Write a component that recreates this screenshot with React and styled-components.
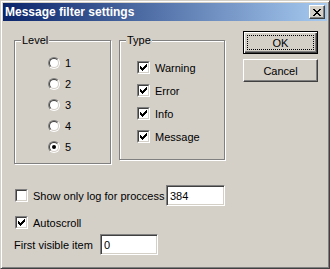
import React from 'react';
import styled, { createGlobalStyle } from 'styled-components';

const GlobalStyle = createGlobalStyle`
  html, body {
    margin: 0;
    padding: 0;
    background: #d4d0c8;
  }
  body {
    font-family: "Liberation Sans", Arial, sans-serif;
    font-size: 11px;
    color: #000;
  }
`;

const Window = styled.div`
  box-sizing: border-box;
  width: 330px;
  height: 269px;
  padding: 2px;
  background: #d4d0c8;
  border: 1px solid;
  border-color: #d4d0c8 #404040 #404040 #d4d0c8;
  box-shadow: inset 1px 1px 0 #fff, inset -1px -1px 0 #808080;
  display: flex;
  flex-direction: column;
`;

const TitleBar = styled.div`
  height: 18px;
  display: flex;
  align-items: center;
  justify-content: space-between;
  padding: 0 2px 0 2px;
  background: linear-gradient(to right, #0a246a, #a6caf0);
`;

const TitleText = styled.span`
  color: #fff;
  font-weight: bold;
  font-size: 12px;
`;

const CloseButton = styled.button`
  box-sizing: border-box;
  width: 16px;
  height: 14px;
  padding: 0;
  background: #d4d0c8;
  border: 1px solid;
  border-color: #fff #404040 #404040 #fff;
  box-shadow: inset -1px -1px 0 #808080;
  display: flex;
  align-items: center;
  justify-content: center;
`;

const Body = styled.div`
  padding: 13px 0 0 11px;
  display: flex;
  flex-direction: column;
`;

const TopRow = styled.div`
  display: flex;
  align-items: flex-start;
`;

const Group = styled.fieldset`
  box-sizing: border-box;
  margin: 0 ${(p) => p.$gapRight || 0}px 0 0;
  padding: 0;
  width: ${(p) => p.$width}px;
  height: ${(p) => p.$height}px;
  border: 1px solid #808080;
  box-shadow: inset 1px 1px 0 #fff, 1px 1px 0 #fff;
`;

const Legend = styled.legend`
  margin-left: 6px;
  padding: 0 1px;
  background: #d4d0c8;
  line-height: 13px;
`;

const OptionList = styled.div`
  display: flex;
  flex-direction: column;
  padding: ${(p) => p.$top}px 0 0 ${(p) => p.$left}px;
`;

const OptionRow = styled.label`
  display: flex;
  align-items: center;
  height: ${(p) => p.$height}px;
  gap: 5px;
`;

const RadioOuter = styled.span`
  box-sizing: border-box;
  width: 12px;
  height: 12px;
  border-radius: 50%;
  border: 1px solid;
  border-color: #808080 #fff #fff #808080;
  display: flex;
`;

const RadioInner = styled.span`
  box-sizing: border-box;
  flex: 1;
  border-radius: 50%;
  border: 1px solid;
  border-color: #404040 #d4d0c8 #d4d0c8 #404040;
  background: #fff;
  display: flex;
  align-items: center;
  justify-content: center;
`;

const RadioDot = styled.span`
  width: 4px;
  height: 4px;
  border-radius: 50%;
  background: #000;
`;

const CheckOuter = styled.span`
  box-sizing: border-box;
  flex: none;
  width: 13px;
  height: 13px;
  border: 1px solid;
  border-color: #808080 #fff #fff #808080;
  display: flex;
`;

const CheckInner = styled.span`
  box-sizing: border-box;
  flex: 1;
  border: 1px solid;
  border-color: #404040 #d4d0c8 #d4d0c8 #404040;
  background: #fff;
  display: flex;
  align-items: center;
  justify-content: center;
`;

const ButtonColumn = styled.div`
  display: flex;
  flex-direction: column;
  gap: 5px;
  margin-top: -3px;
`;

const Button = styled.button`
  position: relative;
  box-sizing: border-box;
  width: 75px;
  height: 23px;
  padding: 0;
  font-family: inherit;
  font-size: 11px;
  color: #000;
  background: #d4d0c8;
  border: 1px solid;
  border-color: ${(p) => (p.$default ? '#000' : '#fff #404040 #404040 #fff')};
  box-shadow: ${(p) =>
    p.$default
      ? 'inset 1px 1px 0 #fff, inset -1px -1px 0 #404040, inset -2px -2px 0 #808080'
      : 'inset -1px -1px 0 #808080'};

  &::after {
    content: '';
    display: ${(p) => (p.$default ? 'block' : 'none')};
    position: absolute;
    inset: 3px;
    border: 1px dotted #000;
  }
`;

const FieldRow = styled.div`
  display: flex;
  align-items: center;
  height: ${(p) => p.$height}px;
  margin-top: ${(p) => p.$top || 0}px;
  padding-left: ${(p) => p.$indent || 0}px;
`;

const RowLabel = styled.span`
  width: ${(p) => p.$width}px;
  flex: none;
  margin-left: ${(p) => p.$gap || 0}px;
`;

const TextBox = styled.input`
  box-sizing: border-box;
  width: ${(p) => p.$width}px;
  height: 21px;
  padding: 0 3px;
  font-family: inherit;
  font-size: 11px;
  background: #fff;
  border: 1px solid;
  border-color: #808080 #fff #fff #808080;
  box-shadow: inset 1px 1px 0 #404040, inset -1px -1px 0 #d4d0c8;
  outline: none;
`;

const CheckMark = () => (
  <svg width="7" height="7" viewBox="0 0 7 7" shapeRendering="crispEdges">
    <path
      d="M0 2h1v3H0zM1 3h1v3H1zM2 4h1v3H2zM3 3h1v3H3zM4 2h1v3H4zM5 1h1v3H5zM6 0h1v3H6z"
      fill="#000"
    />
  </svg>
);

const CloseGlyph = () => (
  <svg width="8" height="7" viewBox="0 0 8 7" shapeRendering="crispEdges">
    <path
      d="M0 0h2v1H0zM6 0h2v1H6zM1 1h2v1H1zM5 1h2v1H5zM2 2h4v1H2zM3 3h2v1H3zM2 4h4v1H2zM1 5h2v1H1zM5 5h2v1H5zM0 6h2v1H0zM6 6h2v1H6z"
      fill="#000"
    />
  </svg>
);

const Radio = ({ checked }) => (
  <RadioOuter>
    <RadioInner>{checked && <RadioDot />}</RadioInner>
  </RadioOuter>
);

const Checkbox = ({ checked }) => (
  <CheckOuter>
    <CheckInner>{checked && <CheckMark />}</CheckInner>
  </CheckOuter>
);

const levels = [1, 2, 3, 4, 5];
const types = ['Warning', 'Error', 'Info', 'Message'];

const App = () => (
  <>
    <GlobalStyle />
    <Window>
      <TitleBar>
        <TitleText>Message filter settings</TitleText>
        <CloseButton>
          <CloseGlyph />
        </CloseButton>
      </TitleBar>
      <Body>
        <TopRow>
          <Group $width={97} $height={130} $gapRight={8}>
            <Legend>Level</Legend>
            <OptionList $top={5} $left={33}>
              {levels.map((lv) => (
                <OptionRow key={lv} $height={21}>
                  <Radio checked={lv === 5} />
                  {lv}
                </OptionRow>
              ))}
            </OptionList>
          </Group>
          <Group $width={106} $height={126} $gapRight={18}>
            <Legend>Type</Legend>
            <OptionList $top={9} $left={17}>
              {types.map((t) => (
                <OptionRow key={t} $height={23}>
                  <Checkbox checked />
                  {t}
                </OptionRow>
              ))}
            </OptionList>
          </Group>
          <ButtonColumn>
            <Button $default>OK</Button>
            <Button>Cancel</Button>
          </ButtonColumn>
        </TopRow>
        <FieldRow $height={21} $top={21} $indent={1}>
          <Checkbox />
          <RowLabel $width={133} $gap={5}>Show only log for proccess</RowLabel>
          <TextBox $width={59} defaultValue="384" />
        </FieldRow>
        <FieldRow $height={21} $top={6} $indent={1}>
          <Checkbox checked />
          <RowLabel $width={80} $gap={5}>Autoscroll</RowLabel>
        </FieldRow>
        <FieldRow $height={21} $top={1} $indent={-1}>
          <RowLabel $width={86}>First visible item</RowLabel>
          <TextBox $width={58} defaultValue="0" />
        </FieldRow>
      </Body>
    </Window>
  </>
);

export default App;
